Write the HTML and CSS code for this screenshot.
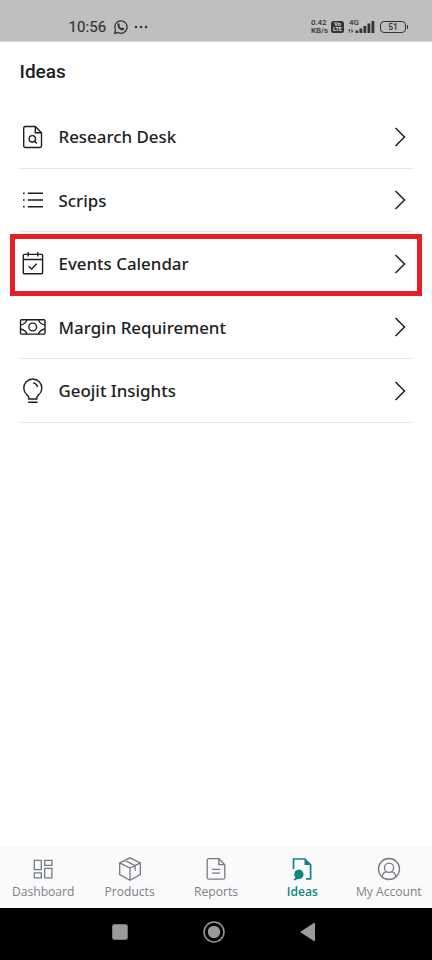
FILE: index.html
```html
<!DOCTYPE html>
<html lang="en">
<head>
<meta charset="utf-8">
<title>Ideas</title>
<link rel="stylesheet" href="styles.css">
</head>
<body>
<div class="screen">
  <div class="status">
    <span class="clock">10:56</span>
    <svg class="chat" width="16" height="16" viewBox="0 0 16 16"><path d="M1.600 14.400l.9-3.400a6.200 6.200 0 1 1 2.500 2.500z" fill="none" stroke="#333" stroke-width="1.300"/><path d="M5 4.600l1-.3.9 1.900-.6.9c.5 1 1.300 1.700 2.300 2.200l1-.7 1.700.9c.1 1.300-1 1.900-2 1.800C6.800 11 4.500 8.500 4.400 6.200c0-.7.2-1.300.6-1.600z" fill="#333"/></svg>
    <svg class="more" width="14" height="4" viewBox="0 0 14 4"><g fill="#333"><circle cx="2" cy="2" r="1.300"/><circle cx="7" cy="2" r="1.300"/><circle cx="12" cy="2" r="1.300"/></g></svg>
    <span class="speed"><span>0.42</span><span>KB/s</span></span>
    <span class="volte"><span>Vo</span><span>LTE</span></span>
    <span class="signal">
      <span class="net">4G</span>
      <svg width="27" height="13" viewBox="0 0 27 13"><g fill="#333"><path d="M1.500 13V11H0l2-2.300V13zM3.500 8.700V13l2-2.300H4.300v-2zM7.500 10.500h2.800V13H7.500zM11.500 8.500h2.800V13h-2.800zM15.500 6h2.800v7h-2.800zM19.500 3.500h2.800V13h-2.800zM23.500 1h2.800v12h-2.800z"/></g></svg>
    </span>
    <span class="battery">51</span>
  </div>

  <h1 class="title">Ideas</h1>

  <div class="list">
    <div class="row">
      <svg class="icon" viewBox="0 0 28 28"><path d="M6.500 3.500h9.800l6.200 6.200v13a1.800 1.800 0 0 1-1.800 1.800H6.500a1.800 1.800 0 0 1-1.800-1.800V5.300a1.800 1.800 0 0 1 1.800-1.800zM16.300 3.500v6.200h6.200"/><circle cx="13.300" cy="15.800" r="3.200"/><path d="M15.600 18.100l2.200 2.300"/></svg>
      <span class="label">Research Desk</span>
      <svg class="chev" viewBox="0 0 12 20"><path d="M1.500 1l9 9-9 9"/></svg>
    </div>
    <div class="row">
      <svg class="icon" viewBox="0 0 28 28"><path d="M8.800 7.200h15.200M8.800 14h15.200M8.800 20.800h15.200M4 7.200h1.700M4 14h1.700M4 20.800h1.700"/></svg>
      <span class="label">Scrips</span>
      <svg class="chev" viewBox="0 0 12 20"><path d="M1.500 1l9 9-9 9"/></svg>
    </div>
    <div class="row marked">
      <svg class="icon" viewBox="0 0 28 28"><rect x="4.300" y="4.400" width="19.300" height="19.300" rx="1"/><path d="M4.300 9.500h19.300M9.200 2v4.500M18.800 2v4.500M9.600 16.200l3.100 2.800 5-5.200"/></svg>
      <span class="label">Events Calendar</span>
      <svg class="chev" viewBox="0 0 12 20"><path d="M1.500 1l9 9-9 9"/></svg>
    </div>
    <div class="row">
      <svg class="icon" viewBox="0 0 28 28"><rect x="1.500" y="6.800" width="24.500" height="14.300" rx="1"/><circle cx="13.700" cy="14" r="3.900"/><path d="M8 6.900c-.8 2.400-2.800 4.300-6.300 5M8 21c-.8-2.400-2.800-4.300-6.300-5M19.500 6.900c.8 2.400 2.800 4.300 6.300 5M19.500 21c.8-2.400 2.800-4.300 6.300-5"/></svg>
      <span class="label">Margin Requirement</span>
      <svg class="chev" viewBox="0 0 12 20"><path d="M1.500 1l9 9-9 9"/></svg>
    </div>
    <div class="row">
      <svg class="icon" viewBox="0 0 28 28"><path d="M9.800 22v-1.500c0-1.200-.9-1.900-1.900-2.700a9 9 0 1 1 11.800 0c-1 .8-1.900 1.500-1.900 2.700V22zM9.200 25.300h9.400M14.200 6c2.500.3 3.800 1.800 4.200 4.200"/></svg>
      <span class="label">Geojit Insights</span>
      <svg class="chev" viewBox="0 0 12 20"><path d="M1.500 1l9 9-9 9"/></svg>
    </div>
  </div>

  <div class="tabs">
    <div class="tab">
      <svg viewBox="0 0 26 26"><path d="M4.300 4.300h7v9.400h-7zM14.700 4.300h7.200v5h-7.200zM4.300 16.800h7v5h-7zM14.700 12.400h7.200v9.400h-7.200z"/></svg>
      <span>Dashboard</span>
    </div>
    <div class="tab">
      <svg viewBox="0 0 26 26"><path d="M13 1.800l10.300 5v11.700L13 24.200 2.700 18.500V6.800zM2.700 6.800L13 12l10.300-5.200M13 12v12.200M7.800 4.400l10.300 5.200v5.200"/></svg>
      <span>Products</span>
    </div>
    <div class="tab">
      <svg viewBox="0 0 26 26"><path d="M5.700 2.700h10.100l6 6v12.900a1.500 1.500 0 0 1-1.500 1.500H5.700a1.500 1.500 0 0 1-1.500-1.500V4.200a1.500 1.500 0 0 1 1.500-1.500zM15.800 2.700v6h6M9 13.300h8M9 17.200h8"/></svg>
      <span>Reports</span>
    </div>
    <div class="tab active">
      <svg viewBox="0 0 26 26"><path class="bold" d="M4.500 13V3h11.300l5.800 5.800v14.100h-4.600"/><path class="fill" d="M15.500 2.300v6.800h6.800zM6.500 21.600a4.700 4.700 0 1 1 2.200 1.300l-3 1.600-1.200-.7z"/></svg>
      <span>Ideas</span>
    </div>
    <div class="tab">
      <svg viewBox="0 0 26 26"><circle cx="13" cy="13" r="10.500"/><circle cx="13" cy="11.800" r="4.600"/><path d="M6.200 20.700c.4-3 2-4.500 4.500-5M19.800 20.700c-.4-3-2-4.500-4.500-5"/></svg>
      <span>My Account</span>
    </div>
  </div>

  <div class="sysnav">
    <svg viewBox="0 0 16 16"><rect width="15.500" height="15.500" x=".2" y=".2" rx="2"/></svg>
    <svg class="home" viewBox="0 0 22 22"><circle cx="11" cy="11" r="10" class="ring"/><circle cx="11" cy="11" r="6.200"/></svg>
    <svg viewBox="0 0 16 18"><path d="M15 .3v17.400a.7.7 0 0 1-1 .2L.7 9.600a.7.7 0 0 1 0-1.200L14 .1a.7.7 0 0 1 1 .2z"/></svg>
  </div>
</div>
</body>
</html>
```

FILE: styles.css
```css
* { box-sizing: border-box; }
body { margin: 0; background: #fff; color: #1b1e24; }
svg { display: block; flex: none; }

.screen {
  width: 432px;
  height: 960px;
  display: flex;
  flex-direction: column;
  font-family: "Noto Sans", sans-serif;
}

.status {
  height: 42px;
  padding: 12px 26px 0 68.500px;
  display: flex;
  align-items: center;
  background: #bfbfbf;
  border-bottom: 1px solid #d4d4d4;
  color: #333;
  font-family: Roboto, sans-serif;
}
.clock { font-size: 15px; font-weight: 400; letter-spacing: 0.1px; width: 44.500px; -webkit-text-stroke: 0.200px #333; }
.more { margin: 0 auto 0 5px; }
.speed {
  display: flex;
  flex-direction: column;
  width: 20px;
  font-size: 8px;
  line-height: 8px;
  font-weight: 500;
  letter-spacing: -0.100px;
}
.volte {
  display: flex;
  flex-direction: column;
  align-items: center;
  justify-content: center;
  width: 13px;
  height: 12px;
  border-radius: 2.500px;
  background: #333;
  color: #ddd;
  font-size: 5.500px;
  line-height: 5px;
  font-weight: 700;
}
.signal { display: flex; margin-left: 4px; width: 32px; position: relative; }
.net { position: absolute; left: 1px; top: -1px; font-size: 8px; line-height: 8px; font-weight: 500; }
.battery {
  position: relative;
  width: 26px;
  height: 12px;
  border: 1px solid #333;
  border-radius: 4px;
  font-size: 8.500px;
  line-height: 10px;
  font-weight: 500;
  text-align: center;
}
.battery::after {
  content: "";
  position: absolute;
  right: -3px;
  top: 3px;
  width: 1.500px;
  height: 4px;
  background: #333;
}

.title {
  margin: 0;
  height: 63px;
  padding: 18px 0 0 19.500px;
  font: 500 19px/24px Roboto, sans-serif;
}

.list { padding: 0 19px; }
.row {
  position: relative;
  height: 63.500px;
  padding-top: 1px;
  display: flex;
  align-items: center;
  border-bottom: 1px solid #e6e7e8;
}
.marked { border-bottom-color: transparent; }
.marked::after {
  content: "";
  box-sizing: border-box;
  position: absolute;
  left: -9px;
  right: -9px;
  top: 2px;
  height: 62px;
  border: 5px solid #e61e25;
}
.icon { width: 28px; height: 28px; fill: none; stroke: #1b1e24; stroke-width: 1.400; }
.label { margin: -0.500px 0 0 11.500px; font-size: 16.900px; font-weight: 500; white-space: nowrap; }
.chev { width: 12px; height: 20px; margin: 0 7px 0 auto; fill: none; stroke: #1b1e24; stroke-width: 1.500; }

.tabs {
  margin-top: auto;
  height: 62px;
  padding-top: 10px;
  display: grid;
  grid-template-columns: repeat(5, 1fr);
  background: #fafafa;
}
.tab {
  display: flex;
  flex-direction: column;
  align-items: center;
  font-family: "Open Sans", sans-serif;
  font-size: 12.100px;
  line-height: 20px;
  color: #7b818b;
  white-space: nowrap;
}
.tab svg { width: 26px; height: 26px; fill: none; stroke: #737985; stroke-width: 1.300; }
.active { color: #10857b; font-weight: 600; }
.active svg .bold { stroke: #10857b; stroke-width: 1.700; }
.active svg .fill { fill: #10857b; stroke: none; }

.sysnav {
  height: 52px;
  padding: 0 116px 4px 112px;
  display: flex;
  align-items: center;
  justify-content: space-between;
  background: #000;
}
.sysnav svg { width: 16px; height: 18px; fill: #9b9b9b; }
.sysnav .home { width: 22px; height: 22px; }
.sysnav .ring { fill: none; stroke: #9b9b9b; stroke-width: 1.500; }
```
